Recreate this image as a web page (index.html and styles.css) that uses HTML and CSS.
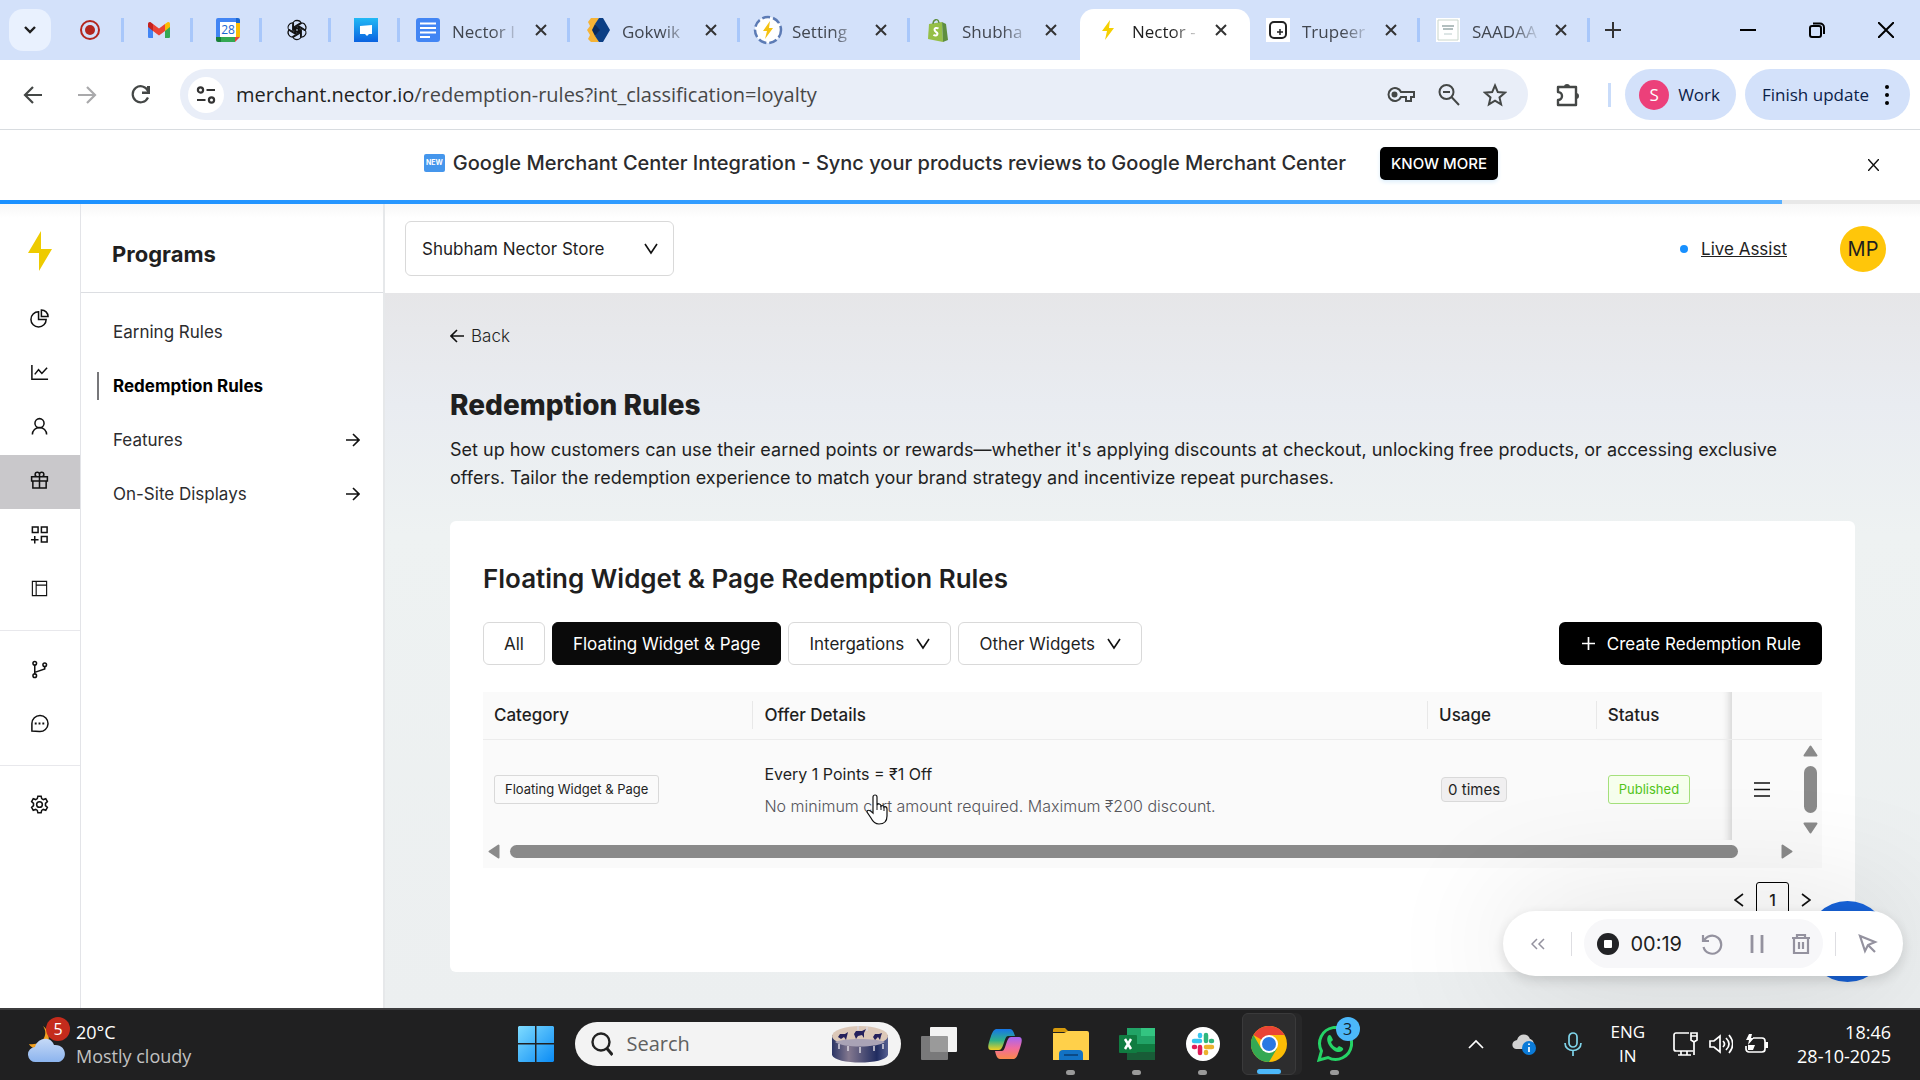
FILE: index.html
```html
<!DOCTYPE html>
<html lang="en">
<head>
    <meta charset="UTF-8">
    <meta name="viewport" content="width=device-width, initial-scale=1.0">
    <title>Nector - Redemption Rules</title>
    <link rel="stylesheet" href="styles.css">
</head>
<body>

<!-- Browser tabs -->
<div class="tab-strip">
    <button class="tab-search" aria-label="Search tabs">
        <svg width="14" height="14" viewBox="0 0 14 14"><path d="M2 4l5 5 5-5" fill="none" stroke="#1f1f1f" stroke-width="2.4"/></svg>
    </button>
    <div class="tab pinned">
        <svg width="22" height="22" viewBox="0 0 22 22"><circle cx="11" cy="11" r="9" fill="none" stroke="#b3261e" stroke-width="2"/><circle cx="11" cy="11" r="5" fill="#b3261e"/></svg>
    </div>
    <div class="tab pinned">
        <svg width="24" height="18" viewBox="0 0 24 18"><path d="M1 3v13a1 1 0 0 0 1 1h4V7z" fill="#4285f4"/><path d="M23 3v13a1 1 0 0 1-1 1h-4V7z" fill="#34a853"/><path d="M18 3l2.500-1.800C22 .4 23 1.500 23 3v3l-5 4z" fill="#fbbc04"/><path d="M6 10V3l6 4.500L18 3v7l-6 4.500z" fill="#ea4335"/><path d="M1 3C1 1.500 2.500.4 4 1.500L6 3v7L1 6z" fill="#c5221f"/></svg>
    </div>
    <div class="tab pinned">
        <svg width="24" height="24" viewBox="0 0 24 24"><path d="M0 2a2 2 0 0 1 2-2h18v4H4v16H0z" fill="#4285f4"/><path d="M20 0h2a2 2 0 0 1 2 2v3h-4z" fill="#1967d2"/><path d="M20 5h4v14h-4z" fill="#fbbc04"/><path d="M4 19h15v5H4z" fill="#34a853"/><path d="M0 19h5v5H2a2 2 0 0 1-2-2z" fill="#188038"/><path d="M19 24v-5h5z" fill="#ea4335"/><path d="M4 4h16v15H4z" fill="#fff"/><text x="12" y="16" class="calendar-day">28</text></svg>
    </div>
    <div class="tab pinned">
        <svg width="22" height="22" viewBox="0 0 24 24" fill="none" stroke="#111" stroke-width="1.300" stroke-linejoin="round">
            <g id="knot"><path d="M12 1.500a5 5 0 0 1 4.700 3.300L10.500 8.400v5.800L7.300 12.300V6.200A4.700 4.700 0 0 1 12 1.500z"/></g>
            <use href="#knot" transform="rotate(60 12 12)"/><use href="#knot" transform="rotate(120 12 12)"/><use href="#knot" transform="rotate(180 12 12)"/><use href="#knot" transform="rotate(240 12 12)"/><use href="#knot" transform="rotate(300 12 12)"/>
        </svg>
    </div>
    <div class="tab pinned">
        <svg width="24" height="24" viewBox="0 0 24 24"><defs><linearGradient id="chat" x1="0" y1="0" x2="0" y2="1"><stop offset="0" stop-color="#21b9f5"/><stop offset="1" stop-color="#0a62e0"/></linearGradient></defs><path d="M0 0h24v24H0z" fill="url(#chat)"/><path d="M6 8l12-1v9h-3l-2 2-2-2H6z" fill="#fff"/></svg>
    </div>
    <div class="tab">
        <svg width="24" height="24" viewBox="0 0 24 24"><rect width="24" height="24" rx="3" fill="#4285f4"/><path d="M4 5.500h16M4 10h16M4 14.500h16M4 19h10" stroke="#fff" stroke-width="2.200"/></svg>
        <span class="tab-title">Nector I</span>
        <button class="tab-close" aria-label="Close tab"><svg width="12" height="12" viewBox="0 0 12 12"><path d="M1 1l10 10M11 1L1 11"/></svg></button>
    </div>
    <div class="tab">
        <svg width="24" height="24" viewBox="0 0 24 24"><path d="M5 0h8l-3 6 3 6-3 6 3 6H5l-3-3 2-4-3-5 3-4-2-4z" fill="#f5b335"/><path d="M13 0h4l7 12-7 12h-4l-4-6 4-6-4-6z" fill="#0b3f85"/><path d="M9 6l5 6-5 6-3-6z" fill="#072a5e"/></svg>
        <span class="tab-title">Gokwik</span>
        <button class="tab-close" aria-label="Close tab"><svg width="12" height="12" viewBox="0 0 12 12"><path d="M1 1l10 10M11 1L1 11"/></svg></button>
    </div>
    <div class="tab">
        <svg class="loading-icon" width="30" height="30" viewBox="0 0 30 30"><circle cx="15" cy="15" r="13" fill="#fff" stroke="#5c7bb5" stroke-width="2.500" stroke-dasharray="8 3"/><path d="M17 6l-7 10h4l-2 8 8-11h-4z" fill="#f5c211"/></svg>
        <span class="tab-title">Setting</span>
        <button class="tab-close" aria-label="Close tab"><svg width="12" height="12" viewBox="0 0 12 12"><path d="M1 1l10 10M11 1L1 11"/></svg></button>
    </div>
    <div class="tab no-line">
        <svg width="24" height="24" viewBox="0 0 24 24"><path d="M3 6l13-2 1 20-15-3z" fill="#95bf47"/><path d="M16 4l4 2 2 16-5 2z" fill="#5e8e3e"/><path d="M7 6c0-4 5-7 6-1" fill="none" stroke="#5e8e3e" stroke-width="1.400"/><path d="M12.500 10.500c-2-1.200-4-.4-4 1.300 0 2 3 2 3 4 0 2-2.500 2.300-4 1" fill="none" stroke="#fff" stroke-width="2"/></svg>
        <span class="tab-title">Shubha</span>
        <button class="tab-close" aria-label="Close tab"><svg width="12" height="12" viewBox="0 0 12 12"><path d="M1 1l10 10M11 1L1 11"/></svg></button>
    </div>
    <div class="tab active">
        <svg width="24" height="24" viewBox="0 0 24 24"><path d="M14 2L6 13h5l-2 9 9-12h-5z" fill="#f5d000"/></svg>
        <span class="tab-title">Nector -</span>
        <button class="tab-close" aria-label="Close tab"><svg width="12" height="12" viewBox="0 0 12 12"><path d="M1 1l10 10M11 1L1 11"/></svg></button>
    </div>
    <div class="tab">
        <svg width="24" height="24" viewBox="0 0 24 24"><path d="M0 0h24v24H0z" fill="#fff"/><rect x="4" y="4" width="16" height="16" rx="4" fill="none" stroke="#222" stroke-width="2"/><path d="M14 11v6M11 14h6" stroke="#222" stroke-width="1.500"/></svg>
        <span class="tab-title">Trupeer</span>
        <button class="tab-close" aria-label="Close tab"><svg width="12" height="12" viewBox="0 0 12 12"><path d="M1 1l10 10M11 1L1 11"/></svg></button>
    </div>
    <div class="tab">
        <svg width="24" height="24" viewBox="0 0 24 24"><path d="M0 0h24v24H0z" fill="#fff"/><path d="M2 2h20v20H2z" fill="none" stroke="#c9d6cc"/><path d="M6 8h12M7 11h10" stroke="#9aa" stroke-width="1.500"/><path d="M8 16h8" stroke="#bcc"/></svg>
        <span class="tab-title">SAADAA</span>
        <button class="tab-close" aria-label="Close tab"><svg width="12" height="12" viewBox="0 0 12 12"><path d="M1 1l10 10M11 1L1 11"/></svg></button>
    </div>
    <button class="new-tab" aria-label="New tab"><svg width="16" height="16" viewBox="0 0 16 16"><path d="M8 0v16M0 8h16" stroke="#333" stroke-width="2"/></svg></button>
    <div class="window-buttons">
        <button aria-label="Minimize"><svg width="16" height="16" viewBox="0 0 16 16"><path d="M0 8h16"/></svg></button>
        <button aria-label="Restore"><svg width="16" height="16" viewBox="0 0 16 16"><rect x="1" y="4" width="11" height="11" rx="2"/><path d="M4 1.500h7a4 4 0 0 1 4 4V12"/></svg></button>
        <button aria-label="Close"><svg width="16" height="16" viewBox="0 0 16 16"><path d="M0 0l16 16M16 0L0 16"/></svg></button>
    </div>
</div>

<!-- Browser toolbar -->
<div class="toolbar">
    <div class="nav-buttons">
        <button aria-label="Back"><svg width="20" height="20" viewBox="0 0 20 20"><path d="M19 10H2M10 2l-8 8 8 8" fill="none" stroke="#444746" stroke-width="2.200"/></svg></button>
        <button aria-label="Forward"><svg width="20" height="20" viewBox="0 0 20 20"><path d="M1 10h17M10 2l8 8-8 8" fill="none" stroke="#a9a9ab" stroke-width="2.200"/></svg></button>
        <button aria-label="Reload"><svg width="20" height="20" viewBox="0 0 20 20"><path d="M17 12.500A8 8 0 1 1 17 6" fill="none" stroke="#444746" stroke-width="2.200"/><path d="M19 1v8h-8V6.500h5V1z" fill="#444746"/></svg></button>
    </div>
    <div class="omnibox">
        <button class="site-info" aria-label="Site information"><svg width="20" height="20" viewBox="0 0 20 20" fill="none" stroke="#333" stroke-width="2.200"><circle cx="4.500" cy="5" r="2.600"/><path d="M10.500 5H19M1 15h8.500"/><circle cx="15.500" cy="15" r="2.600"/></svg></button>
        <a class="url" href="#">merchant.nector.io<span>/redemption-rules?int_classification=loyalty</span></a>
        <div class="omnibox-icons">
            <button aria-label="Passwords"><svg width="28" height="20" viewBox="0 0 28 20" fill="none" stroke="#444746" stroke-width="2"><path d="M14 7h13v5h-3v4h-5v-4h-5a6.500 6.500 0 1 1 0-5z"/><circle cx="7.500" cy="9.500" r="2" fill="#444746"/></svg></button>
            <button aria-label="Zoom"><svg width="22" height="22" viewBox="0 0 22 22" fill="none" stroke="#444746" stroke-width="2"><circle cx="8.500" cy="8" r="7"/><path d="M13.500 13l7.500 8M5 8h7"/></svg></button>
            <button aria-label="Bookmark"><svg width="24" height="24" viewBox="0 0 24 24"><path d="M12 2.500l2.800 6.600 7.100.6-5.400 4.700 1.600 7-6.100-3.700-6.100 3.700 1.600-7-5.400-4.700 7.100-.6z" fill="none" stroke="#444746" stroke-width="2"/></svg></button>
        </div>
    </div>
    <button class="extensions" aria-label="Extensions"><svg width="26" height="26" viewBox="0 0 26 26"><path d="M3 5h18v18H3v-5a4 4 0 0 0 0-8z" fill="none" stroke="#444746" stroke-width="2.400" stroke-linejoin="round"/><path d="M9 5a3 3 0 0 1 6 0zM21 11a3 3 0 0 1 0 6z" fill="#444746"/></svg></button>
    <span class="toolbar-line"></span>
    <button class="pill"><span class="profile">S</span>Work</button>
    <button class="pill finish">Finish update<svg width="4" height="22" viewBox="0 0 4 22"><circle cx="2" cy="3" r="2"/><circle cx="2" cy="11" r="2"/><circle cx="2" cy="19" r="2"/></svg></button>
</div>

<!-- Announcement -->
<div class="banner">
    <div class="banner-text">
        <span class="new-badge">NEW</span>
        <span>Google Merchant Center Integration - Sync your products reviews to Google Merchant Center</span>
        <button class="know-more">KNOW MORE</button>
    </div>
    <button class="banner-close" aria-label="Dismiss"><svg width="11" height="12" viewBox="0 0 11 12"><path d="M0 0l11 12M11 0L0 12" stroke="#111" stroke-width="1.500"/></svg></button>
</div>
<div class="progress"><div class="progress-bar"></div></div>

<div class="app">
    <!-- Icon rail -->
    <nav class="rail">
        <svg class="logo" width="24" height="40" viewBox="0 0 24 40"><path d="M13 0v18h11L11 40V22H0z" fill="#eecb00"/></svg>
        <div class="rail-group">
            <a href="#" aria-label="Dashboard"><svg viewBox="0 0 20 20"><path d="M9 3a8 8 0 1 0 8 8H9z"/><path d="M12 1v7h7a7 7 0 0 0-7-7z"/></svg></a>
            <a href="#" aria-label="Analytics"><svg viewBox="0 0 20 20"><path d="M2 2v15h17M5 12l4-5 3.500 4L18 5"/></svg></a>
            <a href="#" aria-label="Customers"><svg viewBox="0 0 20 20"><circle cx="10" cy="6.500" r="4.800"/><path d="M2.500 18.500a7.500 7.500 0 0 1 15 0"/></svg></a>
            <a href="#" class="selected" aria-label="Programs"><svg viewBox="0 0 20 20"><path d="M1.700 6h16.600v4.500H1.700zM3 10.500h14V18H3zM10 6v12M10 6H7.500A2.300 2.300 0 1 1 10 3.500zM10 6h2.500A2.300 2.300 0 1 0 10 3.500z"/></svg></a>
            <a href="#" aria-label="Apps"><svg viewBox="0 0 20 20"><path d="M2.500 2h6v6h-6zM12 2h6v6h-6zM12 12h6v6h-6zM5 11.500v8M1 15.500h8"/></svg></a>
            <a href="#" aria-label="Pages"><svg viewBox="0 0 20 20" class="thin"><path d="M2.500 2.500h15v15h-15zM6.500 2.500v15M6.500 6.500h11"/></svg></a>
        </div>
        <div class="rail-group lined">
            <a href="#" aria-label="Workflows"><svg viewBox="0 0 20 20"><circle cx="5" cy="3.500" r="1.900"/><circle cx="5" cy="16.500" r="1.900"/><circle cx="15.500" cy="5" r="1.900"/><path d="M5 5.500v9M15.500 7v2.500L5 13"/></svg></a>
            <a href="#" aria-label="Messages"><svg viewBox="0 0 20 20"><path d="M2 18v-8a8.500 8.500 0 1 1 8 8.500z"/><path d="M5 10h2M9 10h2M13 10h2" stroke-width="2"/></svg></a>
        </div>
        <div class="rail-group lined">
            <a href="#" aria-label="Settings"><svg viewBox="0 0 20 20"><path d="M8.300 1.200h3.400l.6 2.600 1.700 1 2.600-.9 1.700 3-2 1.900v2.400l2 1.900-1.700 3-2.600-.9-1.700 1-.6 2.600H8.300l-.6-2.600-1.700-1-2.600.9-1.700-3 2-1.900V8.800l-2-1.900 1.700-3 2.600.9 1.700-1z"/><circle cx="10" cy="10" r="3"/></svg></a>
        </div>
    </nav>

    <!-- Programs menu -->
    <aside class="side">
        <h2>Programs</h2>
        <nav class="side-nav">
            <a href="#">Earning Rules</a>
            <a href="#" class="current">Redemption Rules</a>
            <a href="#">Features<svg width="14" height="14" viewBox="0 0 14 14"><path d="M0 7h13M7 1l6 6-6 6"/></svg></a>
            <a href="#">On-Site Displays<svg width="14" height="14" viewBox="0 0 14 14"><path d="M0 7h13M7 1l6 6-6 6"/></svg></a>
        </nav>
    </aside>

    <main class="main">
        <header class="top">
            <label class="dropdown store">
                <select aria-label="Store"><option>Shubham Nector Store</option></select>
                <svg width="14" height="12" viewBox="0 0 14 12"><path d="M1 1l6 9 6-9"/></svg>
            </label>
            <div class="account">
                <a class="live" href="#"><span class="dot"></span><u>Live Assist</u></a>
                <button class="avatar">MP</button>
            </div>
        </header>

        <div class="content">
            <a class="back" href="#"><svg width="14" height="14" viewBox="0 0 14 14"><path d="M14 7H1M7 1L1 7l6 6"/></svg>Back</a>
            <h1>Redemption Rules</h1>
            <p class="intro">Set up how customers can use their earned points or rewards—whether it's applying discounts at checkout, unlocking free products, or accessing exclusive offers. Tailor the redemption experience to match your brand strategy and incentivize repeat purchases.</p>

            <section class="card">
                <h3>Floating Widget &amp; Page Redemption Rules</h3>
                <div class="filters">
                    <button class="filter">All</button>
                    <button class="filter on">Floating Widget &amp; Page</button>
                    <label class="dropdown">
                        <select aria-label="Integrations"><option>Intergations</option></select>
                        <svg width="14" height="12" viewBox="0 0 14 12"><path d="M1 1l6 9 6-9"/></svg>
                    </label>
                    <label class="dropdown">
                        <select aria-label="Other widgets"><option>Other Widgets</option></select>
                        <svg width="14" height="12" viewBox="0 0 14 12"><path d="M1 1l6 9 6-9"/></svg>
                    </label>
                    <button class="create"><svg width="13" height="13" viewBox="0 0 13 13"><path d="M6.500 0v13M0 6.500h13" stroke="#fff" stroke-width="1.700"/></svg>Create Redemption Rule</button>
                </div>

                <div class="table-wrap">
                    <table>
                        <thead>
                            <tr>
                                <th class="col-category">Category</th>
                                <th class="col-offer">Offer Details</th>
                                <th class="col-usage">Usage</th>
                                <th class="col-status">Status</th>
                                <th class="col-actions"></th>
                                <th class="col-scroll"></th>
                            </tr>
                        </thead>
                        <tbody>
                            <tr>
                                <td><span class="tag">Floating Widget &amp; Page</span></td>
                                <td class="offer">
                                    <div class="offer-title">Every 1 Points = ₹1 Off</div>
                                    <div class="offer-note">No minimum cart amount required. Maximum ₹200 discount.</div>
                                    <svg class="cursor" width="24" height="32" viewBox="0 0 24 32"><path d="M8 17V3a2 2 0 0 1 4 0v8c1-2 4-1 4 1 1-1 3 0 3 1 1-1 3 0 3 2v7c0 5-3 8-8 8-4 0-6-2-8-6l-4-6c0-2 2-3 6 1z" fill="#fff" stroke="#111" stroke-width="1.200"/><path d="M12 11v5M16 12v4M19 13v4" stroke="#111"/></svg>
                                </td>
                                <td><span class="tag usage">0 times</span></td>
                                <td class="col-status"><span class="tag published">Published</span></td>
                                <td class="actions"><button aria-label="Row menu"><svg width="16" height="15" viewBox="0 0 16 15"><path d="M0 1h16M0 7.500h16M0 14h16" stroke="#111" stroke-width="1.700"/></svg></button></td>
                                <td class="scroll-cell">
                                    <div class="v-scroll">
                                        <svg width="15" height="12" viewBox="0 0 15 12"><path d="M7.500 1.500l6 9h-12z"/></svg>
                                        <span></span>
                                        <svg width="15" height="12" viewBox="0 0 15 12"><path d="M7.500 10.500l6-9h-12z"/></svg>
                                    </div>
                                </td>
                            </tr>
                        </tbody>
                    </table>
                    <div class="h-scroll">
                        <svg width="12" height="15" viewBox="0 0 12 15"><path d="M1.500 7.500l9-6v12z"/></svg>
                        <div class="h-track"><div class="h-thumb"></div></div>
                        <svg width="12" height="15" viewBox="0 0 12 15"><path d="M10.500 7.500l-9-6v12z"/></svg>
                    </div>
                </div>

                <div class="pagination">
                    <button aria-label="Previous page"><svg width="10" height="14" viewBox="0 0 10 14"><path d="M9 1L1 7l8 6"/></svg></button>
                    <button class="page">1</button>
                    <button aria-label="Next page"><svg width="10" height="14" viewBox="0 0 10 14"><path d="M1 1l8 6-8 6"/></svg></button>
                </div>
            </section>
        </div>
    </main>
</div>

<!-- Floating chat bubble and screen recorder -->
<button class="chat-bubble" aria-label="Chat"></button>
<div class="recorder">
    <button aria-label="Collapse"><svg width="14" height="12" viewBox="0 0 14 12"><path d="M6 1L1 6l5 5M13 1L8 6l5 5" stroke-width="1.500"/></svg></button>
    <span class="recorder-line"></span>
    <div class="recorder-main">
        <button aria-label="Stop"><svg width="22" height="22" viewBox="0 0 22 22"><circle cx="11" cy="11" r="11" fill="#222326" stroke="none"/><rect x="7" y="7" width="8" height="8" rx="1" fill="#fff" stroke="none"/></svg></button>
        <span class="recorder-time">00:19</span>
        <button aria-label="Restart"><svg width="22" height="22" viewBox="0 0 22 22"><path d="M2 2v6h6M3 8a9 9 0 1 1-.5 6"/></svg></button>
        <button aria-label="Pause"><svg width="14" height="20" viewBox="0 0 14 20"><path d="M2 1v18M12 1v18" stroke-width="2.800"/></svg></button>
        <button aria-label="Delete"><svg width="20" height="22" viewBox="0 0 20 22"><path d="M1 5h18M6 5V2h8v3M3 5v15h14V5M8 9v7M12 9v7" stroke-width="2.200"/></svg></button>
    </div>
    <span class="recorder-line"></span>
    <button class="pointer" aria-label="Pointer"><svg width="20" height="20" viewBox="0 0 20 20"><path d="M2 2l5 15 3-6 7-3zM10 11l7 7"/></svg></button>
</div>

<!-- Taskbar -->
<footer class="taskbar">
    <div class="weather">
        <div class="weather-icon">
            <svg width="38" height="38" viewBox="0 0 38 38"><defs><linearGradient id="cloud" x1="0" y1="0" x2="0" y2="1"><stop offset="0" stop-color="#c5d9f7"/><stop offset="1" stop-color="#8cb4ee"/></linearGradient></defs><path d="M15 1c6 8 0 20-14 18 2 5 12 7 17 2s3-16-3-20z" fill="#f2a01f"/><path d="M8 37a7.500 7.500 0 0 1-1-15c3-10 16-11 19-2 14-1 14 17 3 17z" fill="url(#cloud)"/></svg>
            <span class="count">5</span>
        </div>
        <div class="weather-text"><span>20°C</span><span class="muted">Mostly cloudy</span></div>
    </div>

    <div class="task-center">
        <button class="start" aria-label="Start"><svg width="36" height="36" viewBox="0 0 36 36"><defs><linearGradient id="win" x1="0" y1="0" x2="1" y2="1"><stop offset="0" stop-color="#7fdcff"/><stop offset="1" stop-color="#0a8bf5"/></linearGradient></defs><path d="M1 0h16v17H0V1zM18.500 0H35l1 1v16H18.500zM0 18.500h17V36H1l-1-1zM18.500 18.500H36V35l-1 1H18.500z" fill="url(#win)"/></svg></button>
        <label class="task-search">
            <svg width="22" height="24" viewBox="0 0 22 24"><circle cx="10" cy="10" r="8.500" fill="none" stroke="#222" stroke-width="2.400"/><path d="M15.500 16l6 7" stroke="#222" stroke-width="3"/></svg>
            <input type="text" placeholder="Search" aria-label="Search">
            <svg width="56" height="38" viewBox="0 0 56 38"><defs><linearGradient id="bowl"><stop offset="0" stop-color="#2b3565"/><stop offset=".3" stop-color="#83788f"/><stop offset=".8" stop-color="#202c60"/><stop offset="1" stop-color="#566092"/></linearGradient></defs><path d="M0 10v20c3 10 53 10 56 0V10z" fill="url(#bowl)"/><ellipse cx="28" cy="11" rx="28" ry="10" fill="#dcc8b8"/><path d="M3 17c8-4 42-4 50 0-8 6-42 6-50 0z" fill="#a9a3b6"/><path d="M6 12l2-3h5l3-2-1 4-1 4-2-3-3 2zM22 9l2-3h6l4-2-2 4v5l-2-3-4 1-2 3zM41 12l2-3h4l3-1-1 3-1 4-2-3-3 3z" fill="#25215c"/><path d="M7 19v5M16 21v5M28 22v6M42 21v5M51 19v5M26 1v4M35 2v4" stroke="#d9d6df" stroke-width="1.500"/></svg>
        </label>
        <button class="task" aria-label="Task view"><svg width="36" height="34" viewBox="0 0 36 34"><rect x="9" y="0" width="27" height="25" rx="1" fill="#f3f3f3"/><rect x="0" y="9" width="27" height="24" rx="1" fill="#8a8a8a" opacity=".85"/></svg></button>
        <button class="task" aria-label="Copilot"><svg width="34" height="32" viewBox="0 0 34 32"><defs><linearGradient id="cp1" x1="0" y1="0" x2="0" y2="1"><stop offset="0" stop-color="#1676e8"/><stop offset=".55" stop-color="#2fb28a"/><stop offset="1" stop-color="#f0d020"/></linearGradient><linearGradient id="cp2" x1="0" y1="0" x2="0" y2="1"><stop offset="0" stop-color="#a565f5"/><stop offset=".5" stop-color="#f06aa0"/><stop offset="1" stop-color="#f98a4a"/></linearGradient></defs><path d="M8 1h14c3 0 4 4 5 7h-7c-4 0-4 14-9 14H3c-4 0-3-5-1-11s3-9 6-10z" fill="url(#cp1)"/><path d="M26 31H12c-3 0-4-4-5-8h7c4 0 4-14 9-14h8c4 0 3 5 1 11s-3 10-6 11z" fill="url(#cp2)"/></svg></button>
        <button class="task open" aria-label="File Explorer"><svg width="36" height="33" viewBox="0 0 36 33"><path d="M0 2a2 2 0 0 1 2-2h10l4 4H0z" fill="#d69a0c"/><path d="M0 5h11l4-2h19a2 2 0 0 1 2 2v27H0z" fill="#ffd04a"/><path d="M6 32v-6a4 4 0 0 1 4-4h16a4 4 0 0 1 4 4v6z" fill="#1272c4"/><path d="M11 27h14" stroke="#0b4a86" stroke-width="2"/></svg></button>
        <button class="task open" aria-label="Excel"><svg width="36" height="34" viewBox="0 0 36 34"><path d="M8 1h28v32H8z" fill="#21a366"/><path d="M22 1h14v8H22z" fill="#33c481"/><path d="M8 17h28v8H8z" fill="#107c41"/><path d="M8 25h28v8H8z" fill="#185c37"/><rect y="8" width="18" height="18" rx="1" fill="#107c41"/><path d="M6 12l6 10M12 12L6 22" stroke="#fff" stroke-width="2.500"/></svg></button>
        <button class="task open" aria-label="Slack"><svg width="34" height="34" viewBox="0 0 34 34"><circle cx="17" cy="17" r="17" fill="#fff"/><g stroke-width="4.500" stroke-linecap="round"><path d="M14 8v1M8 14h6" stroke="#36c5f0"/><path d="M20 8v6M25 14h1" stroke="#2eb67d"/><path d="M20 20h6M20 25v1" stroke="#ecb22e"/><path d="M14 20v6M8 20h1" stroke="#e01e5a"/></g></svg></button>
        <button class="task open focused" aria-label="Chrome"><svg width="36" height="36" viewBox="0 0 36 36"><circle cx="18" cy="18" r="18" fill="#fbbc05"/><path d="M18 18L2.400 9A18 18 0 0 1 33.600 9H18z" fill="#ea4335"/><path d="M2.400 9A18 18 0 0 0 18 36l8-13.500H10.200z" fill="#34a853"/><circle cx="18" cy="18" r="9" fill="#fff"/><circle cx="18" cy="18" r="7" fill="#2a78e4"/></svg></button>
        <button class="task open" aria-label="WhatsApp"><svg width="36" height="36" viewBox="0 0 36 36"><path d="M2 34l2.500-9A16 16 0 1 1 11 31.500z" fill="none" stroke="#25d366" stroke-width="3"/><path d="M11 10c2-2 3-1 5 4l-2 2c1 3 3 5 6 6l2-2c5 2 5 3 3 5-6 5-18-8-14-15z" fill="#25d366"/></svg><span class="count blue">3</span></button>
    </div>

    <div class="tray">
        <button aria-label="Hidden icons"><svg width="16" height="10" viewBox="0 0 16 10"><path d="M1 9l7-7 7 7"/></svg></button>
        <button aria-label="OneDrive"><svg width="24" height="22" viewBox="0 0 24 22"><path d="M4 16c-5-1-5-8 1-9C7 0 16 0 18 6c5 1 5 9 0 10z" fill="#d2d2d2" stroke="none"/><circle cx="17" cy="15" r="7" fill="#0b7bd8" stroke="none"/><path d="M17 14v5M17 10.500v1.500" stroke-width="1.700"/></svg></button>
        <button aria-label="Microphone"><svg width="18" height="24" viewBox="0 0 18 24"><g stroke="#7fd4ea"><rect x="5" y="1" width="8" height="14" rx="4"/><path d="M1 11c0 10 16 10 16 0M9 19v5"/></g></svg></button>
        <span class="lang">ENG<br>IN</span>
        <button class="quick" aria-label="Network, volume, battery">
            <svg width="25" height="24" viewBox="0 0 25 24"><path d="M16 1H3a2 2 0 0 0-2 2v14a2 2 0 0 0 2 2h17M5 23h13M8 19v4M14 19v4M18 1h6v7l-3 2-3-2zM21 10v13M18 4h6"/></svg>
            <svg width="24" height="20" viewBox="0 0 24 20"><path d="M1 7h4l6-5v16l-6-5H1zM14 7c2 2 2 4 0 6M17 4c4 4 4 8 0 12M20 1c5 6 5 12 0 18"/></svg>
            <svg width="25" height="20" viewBox="0 0 25 20"><path d="M9 4h9a3 3 0 0 1 3 3v8a3 3 0 0 1-3 3H5a3 3 0 0 1-3-3v-3"/><path d="M21 8h3v6h-3zM5 0h3L7 4h3l-6 7 1-5H2zM4 11h7l-2 5H4z" fill="#fff" stroke="none"/></svg>
        </button>
        <div class="clock">18:46<br>28-10-2025</div>
    </div>
</footer>

</body>
</html>
```

FILE: styles.css
```css
* {
    box-sizing: border-box;
}

body {
    margin: 0;
    height: 100vh;
    display: flex;
    flex-direction: column;
    overflow: hidden;
    font-family: Inter, "Open Sans", sans-serif;
    font-size: 17px;
    color: #1f1f1f;
    background-color: #fff;
}

button {
    display: flex;
    align-items: center;
    justify-content: center;
    padding: 0;
    border: none;
    background: none;
    font: inherit;
    color: inherit;
    cursor: pointer;
}

a {
    color: inherit;
    text-decoration: none;
}

svg {
    flex-shrink: 0;
}

/* Browser tabs */
.tab-strip {
    display: flex;
    align-items: center;
    flex-shrink: 0;
    height: 60px;
    padding-left: 9px;
    background-color: #d3e1fa;
    font-family: "Open Sans", sans-serif;
    color: #41464f;
}

.tab-search {
    width: 42px;
    height: 42px;
    margin-right: 4px;
    border-radius: 14px;
    background-color: #e9f1fe;
}

.tab {
    position: relative;
    display: flex;
    align-items: center;
    flex: 0 1 170px;
    height: 60px;
    padding: 0 17px 0 16px;
    min-width: 0;
}

.tab::after {
    content: "";
    position: absolute;
    right: 0;
    width: 3px;
    height: 24px;
    background-color: #a8c7fa;
}

.tab.active::after,
.tab.no-line::after {
    display: none;
}

.tab.pinned {
    flex: 0 0 69px;
    justify-content: center;
    padding: 0;
}

.tab.active {
    height: 51px;
    margin-top: 9px;
    padding-bottom: 9px;
    border-radius: 14px 14px 0 0;
    background-color: #fff;
    color: #1f1f1f;
}

.calendar-day {
    font: 12px "Open Sans", sans-serif;
    fill: #1967d2;
    text-anchor: middle;
}

.loading-icon {
    margin: 0 -3px;
}

.tab-title {
    flex: 1;
    margin: 2px 4px 0 12px;
    white-space: nowrap;
    -webkit-mask-image: linear-gradient(to right, #000 55%, transparent 95%);
    mask-image: linear-gradient(to right, #000 55%, transparent 95%);
}

.tab-close {
    width: 24px;
    height: 24px;
}

.tab-close svg {
    stroke: #333;
    stroke-width: 2;
}

.new-tab {
    width: 46px;
    height: 40px;
}

.window-buttons {
    display: flex;
    margin-left: auto;
}

.window-buttons button {
    width: 69px;
    height: 40px;
}

.window-buttons svg {
    fill: none;
    stroke: #000;
    stroke-width: 2;
}

/* Browser toolbar */
.toolbar {
    display: flex;
    align-items: center;
    flex-shrink: 0;
    height: 70px;
    padding: 0 10px 0 6px;
    border-bottom: 1px solid #d8dce0;
    font-family: "Open Sans", sans-serif;
}

.nav-buttons {
    display: flex;
}

.nav-buttons button {
    width: 54px;
    height: 50px;
}

.omnibox {
    display: flex;
    align-items: center;
    flex: 1;
    height: 51px;
    margin-left: 12px;
    padding: 0 21px 0 8px;
    border-radius: 26px;
    background-color: #e9eef8;
}

.site-info {
    width: 36px;
    height: 36px;
    border-radius: 50%;
    background-color: #fff;
}

.url {
    flex: 1;
    margin-left: 12px;
    font-size: 20px;
}

.url span {
    color: #474747;
}

.omnibox-icons {
    display: flex;
    gap: 23px;
}

.extensions {
    width: 80px;
}

.toolbar-line {
    width: 3px;
    height: 24px;
    background-color: #c9dcfa;
}

.pill {
    gap: 9px;
    height: 51px;
    margin-left: 14px;
    padding: 0 16px 0 14px;
    border-radius: 26px;
    background-color: #d3e1fa;
    color: #0b2149;
}

.pill.finish {
    gap: 16px;
    margin-left: 9px;
    padding: 0 21px 0 17px;
}

.profile {
    width: 30px;
    border-radius: 50%;
    background-color: #ec407a;
    color: #fff;
    line-height: 30px;
}

/* Announcement */
.banner {
    display: flex;
    align-items: center;
    flex-shrink: 0;
    height: 70px;
    padding: 0 41px 0 54px;
}

.banner-text {
    display: flex;
    align-items: center;
    justify-content: center;
    flex: 1;
    height: 66px;
    align-self: flex-start;
    font-size: 20px;
    font-weight: 500;
    color: #2b2b2d;
}

.new-badge {
    margin-right: 8px;
    padding: 0 2px;
    border-radius: 2px;
    background-color: #4596ec;
    color: #fff;
    font-size: 7px;
    font-weight: 700;
    line-height: 18px;
}

.know-more {
    height: 33px;
    margin-left: 34px;
    padding: 0 11px;
    border-radius: 5px;
    background-color: #000;
    color: #fff;
    font-size: 15px;
    font-weight: 500;
    box-shadow: 0 2px 4px #dceefb;
}

.progress {
    flex-shrink: 0;
    height: 4px;
    background-color: #e8e8e8;
}

.progress-bar {
    width: 92.8%;
    height: 4px;
    background-image: linear-gradient(to right, #1a90ff, #58b0ff);
}

/* App */
.app {
    display: flex;
    flex: 1;
    min-height: 0;
    overflow: hidden;
    background-image: linear-gradient(#f7f7f7, #fff 14px);
}

.rail {
    width: 81px;
    border-right: 1px solid #e3e4e8;
}

.logo {
    display: block;
    margin: 27px auto 22px;
}

.rail-group.lined {
    margin-top: 13px;
    padding-top: 13px;
    border-top: 1px solid #e8e8ec;
}

.rail a {
    display: flex;
    align-items: center;
    justify-content: center;
    height: 54px;
    padding: 0 2px 4px 0;
}

.rail a.selected {
    background-color: #c9c8cb;
}

.rail a svg {
    width: 19px;
    height: 19px;
    fill: none;
    stroke: #111;
    stroke-width: 1.6;
}

.rail a svg.thin {
    stroke-width: 1.2;
}

.side {
    width: 304px;
    border-right: 2px solid #e6e8ea;
}

.side h2 {
    height: 89px;
    margin: 0;
    padding: 10px 31px 0;
    border-bottom: 1px solid #dcdee2;
    font-size: 22px;
    font-weight: 700;
    line-height: 80px;
}

.side-nav {
    padding: 25px 23px 0 16px;
}

.side-nav a {
    display: flex;
    align-items: center;
    justify-content: space-between;
    height: 28px;
    margin-bottom: 26px;
    padding-left: 14px;
    border-left: 2px solid transparent;
    color: #2c2c2e;
}

.side-nav a.current {
    border-color: #77777a;
    font-weight: 700;
    color: #000;
}

.side-nav svg,
.back svg,
.pagination svg {
    fill: none;
    stroke: #111;
    stroke-width: 1.6;
}

.main {
    flex: 1;
    min-width: 0;
    background-image: linear-gradient(#e6e6e8 88px, #e9ecf1 200px, #eef2f2 330px, #eceff0);
}

.top {
    display: flex;
    align-items: center;
    justify-content: space-between;
    height: 89px;
    padding: 0 34px 0 20px;
    background-image: linear-gradient(#f7f7f7, #fff 14px);
}

.dropdown {
    position: relative;
    display: inline-flex;
    align-items: center;
}

.dropdown select {
    appearance: none;
    height: 43px;
    margin: 0;
    padding: 0 46px 0 20px;
    border: 1px solid #d9d9d9;
    border-radius: 6px;
    background-color: #fff;
    font: inherit;
    color: #1f1f1f;
}

.dropdown svg {
    position: absolute;
    right: 21px;
    fill: none;
    stroke: #111;
    stroke-width: 1.6;
    pointer-events: none;
}

.dropdown.store select {
    width: 269px;
    height: 55px;
    padding: 0 40px 0 16px;
}

.dropdown.store svg {
    right: 16px;
}

.account {
    display: flex;
    align-items: center;
    gap: 53px;
}

.live {
    display: flex;
    align-items: center;
    gap: 13px;
}

.dot {
    width: 8px;
    height: 8px;
    border-radius: 50%;
    background-color: #1890ff;
}

.avatar {
    width: 46px;
    height: 46px;
    border-radius: 50%;
    background-color: #ffc60a;
    font-size: 20px;
}

.content {
    padding: 30px 65px 0;
}

.back {
    display: flex;
    align-items: center;
    gap: 7px;
    font-weight: 300;
    line-height: 26px;
}

h1 {
    margin: 38px 0 0;
    font-size: 28px;
    font-weight: 800;
    line-height: 36px;
}

.intro {
    margin: 13px 0 29px;
    padding-right: 40px;
    font-size: 18px;
    line-height: 28px;
}

.card {
    min-height: 451px;
    padding: 36px 33px;
    border-radius: 6px;
    background-color: #fff;
}

.card h3 {
    margin: 0 0 22px;
    font-size: 26px;
    font-weight: 600;
    line-height: 43px;
}

.filters {
    display: flex;
    gap: 7px;
}

.filter {
    height: 43px;
    padding: 0 20px;
    border: 1px solid #d9d9d9;
    border-radius: 6px;
    background-color: #fff;
}

.filter.on {
    border-color: #0a0a0a;
    background-color: #0a0a0a;
    color: #fff;
}

.create {
    gap: 12px;
    height: 43px;
    margin-left: auto;
    padding: 0 21px 0 23px;
    border-radius: 6px;
    background-color: #000;
    color: #fff;
}

/* Rules table */
.table-wrap {
    margin-top: 27px;
    background-color: #fafafa;
}

table {
    width: 100%;
    border-collapse: collapse;
    table-layout: fixed;
}

th {
    height: 47px;
    padding: 0 11px;
    border-bottom: 1px solid #ececec;
    background-image: linear-gradient(#e8e8e8, #e8e8e8);
    background-position: right center;
    background-repeat: no-repeat;
    background-size: 1px 28px;
    font-weight: 500;
    text-align: left;
}

td {
    height: 101px;
    padding: 0 11px;
}

.col-category {
    width: 20.2%;
}

.col-usage {
    width: 12.6%;
}

.col-status {
    width: 10.1%;
    box-shadow: inset -9px 0 7px -6px #d5d5d5;
}

.col-actions {
    width: 66px;
}

.col-scroll {
    width: 24px;
}

th.col-status,
th.col-actions,
th.col-scroll {
    background-image: none;
}

.tag {
    display: inline-block;
    padding: 0 10px;
    border: 1px solid #d9d9d9;
    border-radius: 3px;
    font-size: 13px;
    line-height: 27px;
    white-space: nowrap;
}

.tag.usage {
    margin-left: 2px;
    padding: 0 6px;
    border-radius: 4px;
    background-color: #f0eff0;
    font-size: 15px;
    line-height: 23px;
}

.tag.published {
    border-color: #a5e07c;
    background-color: #f6ffed;
    color: #52c41a;
}

.offer {
    position: relative;
}

.offer-title {
    margin-bottom: 8px;
    font-size: 16px;
    line-height: 24px;
}

.offer-note {
    font-size: 16px;
    font-weight: 300;
    line-height: 24px;
    color: #55555a;
}

.cursor {
    position: absolute;
    left: 112px;
    top: 54px;
}

.actions {
    padding: 0 22px;
}

.scroll-cell {
    padding: 0;
}

.v-scroll {
    display: flex;
    flex-direction: column;
    align-items: center;
    gap: 9px;
    fill: #8a8a8a;
}

.v-scroll span {
    width: 13px;
    height: 47px;
    border-radius: 7px;
    background-color: #8a8a8a;
}

.v-scroll path,
.h-scroll path {
    stroke: #8a8a8a;
    stroke-width: 2;
    stroke-linejoin: round;
}

.h-scroll {
    display: flex;
    align-items: center;
    height: 28px;
    padding: 0 29px 6px 5px;
    fill: #8a8a8a;
}

.h-track {
    flex: 1;
    padding: 0 5px 0 10px;
}

.h-thumb {
    width: 97%;
    height: 13px;
    border-radius: 7px;
    background-color: #8a8a8a;
}

.pagination {
    display: flex;
    align-items: center;
    justify-content: flex-end;
    gap: 12px;
    margin-top: 14px;
    padding-right: 11px;
}

.page {
    width: 33px;
    height: 35px;
    border: 1px solid #000;
    border-radius: 3px;
    font-size: 16px;
    font-weight: 500;
}

/* Floating parts */
.chat-bubble {
    position: fixed;
    right: 32px;
    bottom: 98px;
    width: 81px;
    height: 81px;
    border-radius: 50%;
    background-color: #1763db;
}

.recorder {
    position: fixed;
    right: 17px;
    bottom: 104px;
    display: flex;
    align-items: center;
    height: 65px;
    padding: 0 25px 0 28px;
    border-radius: 33px;
    background-color: #fff;
    box-shadow: 0 4px 14px rgba(0, 0, 0, 0.14), 0 0 130px rgba(0, 0, 0, 0.16);
}

.recorder svg {
    fill: none;
    stroke: #94929f;
    stroke-width: 2.2;
}

.recorder-line {
    width: 1px;
    height: 24px;
    margin-left: 26px;
    background-color: #dedee2;
}

.recorder-main {
    display: flex;
    align-items: center;
    height: 49px;
    margin-left: 12px;
    padding: 0 12px 0 13px;
    border-radius: 25px;
    background-color: #f7f7f9;
    font-size: 20px;
}

.recorder-main + .recorder-line {
    margin-left: 12px;
}

.recorder-time {
    margin: 0 -8px 0 11px;
}

.recorder-main button + button,
.recorder-time + button {
    margin-left: 27px;
}

.pointer {
    margin-left: 22px;
}

/* Taskbar */
.taskbar {
    position: relative;
    display: flex;
    align-items: center;
    justify-content: space-between;
    flex-shrink: 0;
    height: 72px;
    padding: 0 29px 2px 28px;
    border-top: 2px solid #3c3c3e;
    background-color: #202021;
    font-family: "Open Sans", sans-serif;
    line-height: 24px;
    color: #fff;
}

.weather {
    display: flex;
    align-items: center;
    gap: 10px;
    font-size: 18px;
}

.weather-icon {
    position: relative;
    display: flex;
}

.weather-text {
    display: flex;
    flex-direction: column;
}

.muted {
    color: #c2c2c2;
}

.count {
    position: absolute;
    top: -8px;
    right: -4px;
    width: 24px;
    border-radius: 50%;
    background-color: #c42b1c;
    font-size: 16px;
    text-align: center;
}

.count.blue {
    top: 4px;
    right: 8px;
    background-color: #4cb8fa;
    color: #10222e;
}

/* Centred over the full width of the bar, whatever the sides hold */
.task-center {
    position: absolute;
    left: 0;
    right: 0;
    display: flex;
    align-items: center;
    justify-content: center;
    margin-right: 35px;
}

.start {
    margin-right: 21px;
}

.task-search {
    display: flex;
    align-items: center;
    width: 326px;
    height: 44px;
    margin-right: 5px;
    padding: 0 13px 0 16px;
    border-radius: 22px;
    background-color: #f3f3f3;
}

.task-search input {
    flex: 1;
    min-width: 0;
    margin-left: 14px;
    padding: 0;
    border: none;
    background: none;
    font: inherit;
    font-size: 20px;
}

.task-search input::placeholder {
    color: #606060;
}

.task {
    position: relative;
    width: 66px;
    height: 62px;
}

.task.open::after {
    content: "";
    position: absolute;
    bottom: 0;
    width: 9px;
    height: 5px;
    border-radius: 3px;
    background-color: #9a9a9a;
}

.task.focused {
    width: 54px;
    margin: 0 6px;
    border: 1px solid #3a3a3b;
    border-radius: 6px;
    background-color: #2d2d2e;
    box-shadow: 6px 0 0 #272728;
}

.task.focused::after {
    width: 24px;
    background-color: #4cb8fa;
}

.tray {
    display: flex;
    align-items: center;
    gap: 28px;
}

.tray svg {
    fill: none;
    stroke: #fff;
    stroke-width: 1.7;
}

.lang {
    text-align: center;
}

.quick {
    gap: 11px;
}

.clock {
    font-size: 18px;
    text-align: right;
}
```
